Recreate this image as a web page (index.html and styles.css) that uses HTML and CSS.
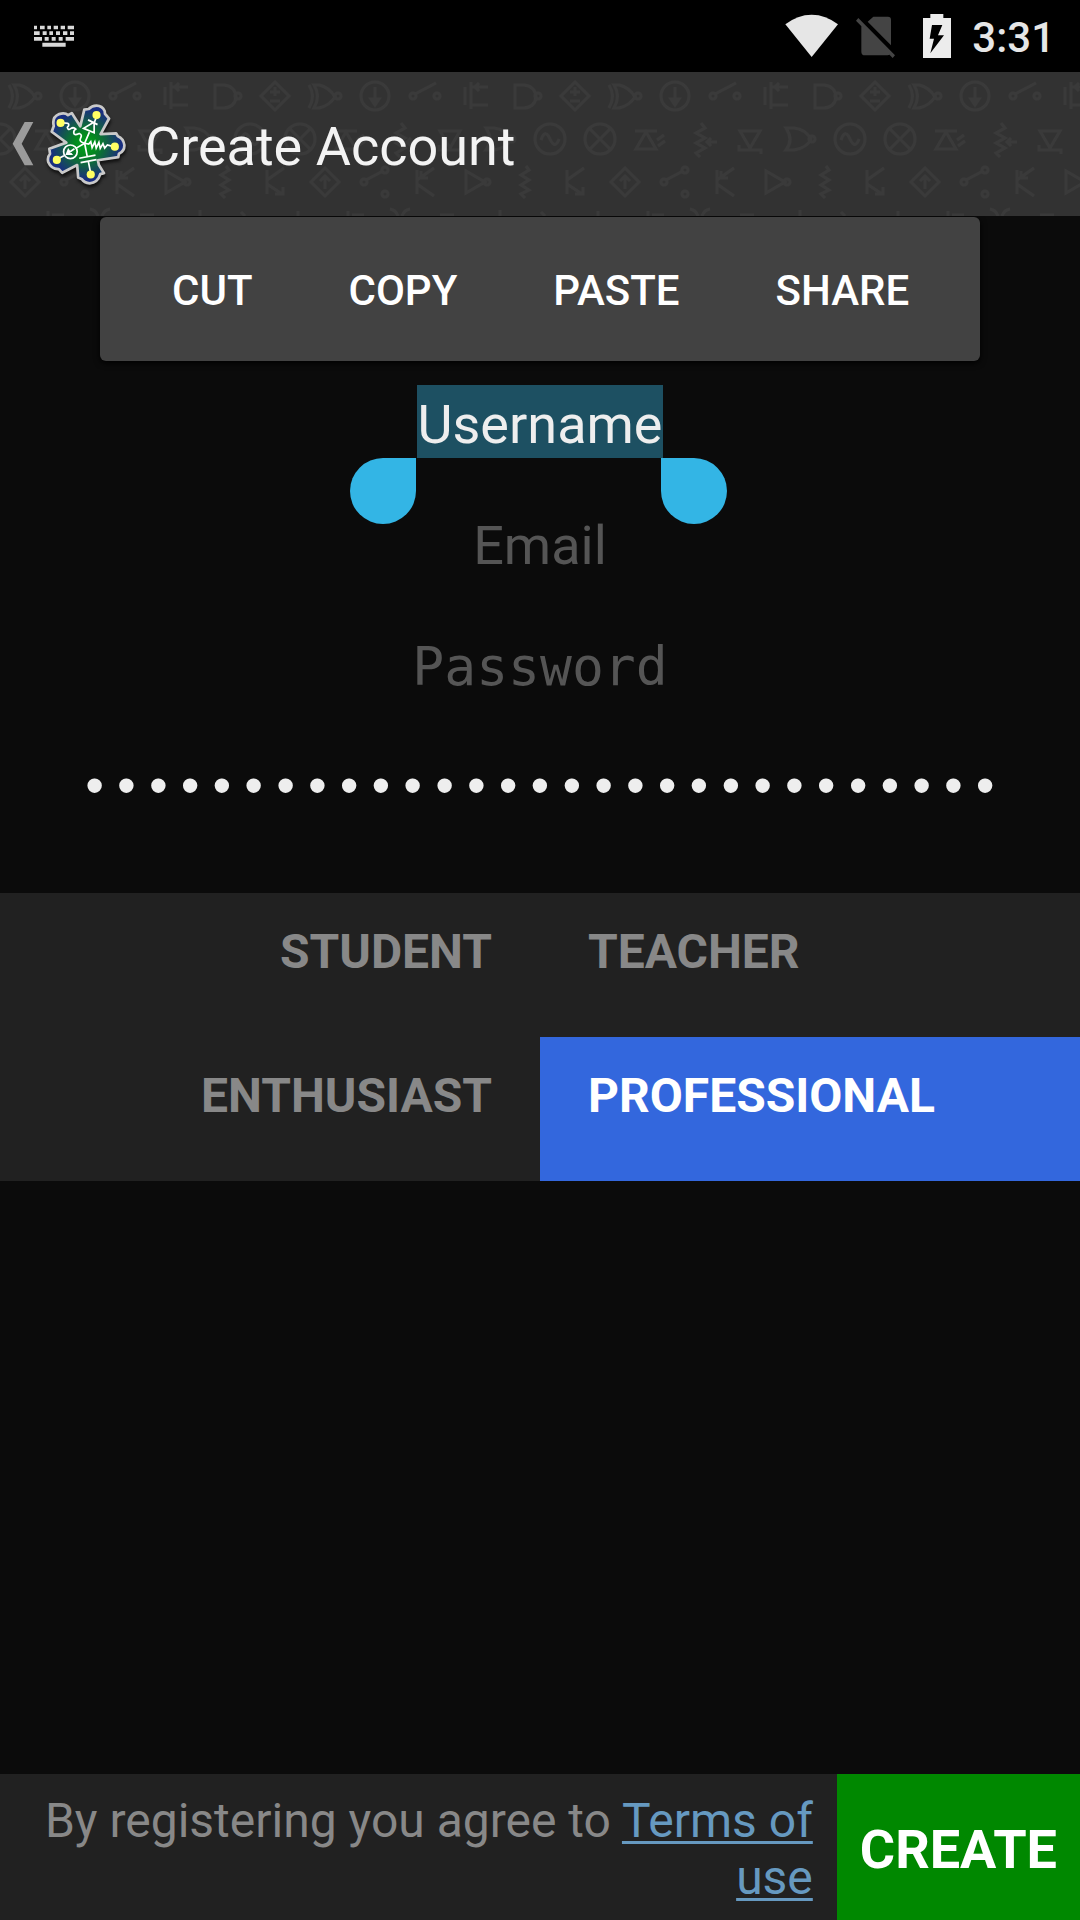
FILE: index.html
```html
<!DOCTYPE html>
<html lang="en">
<head>
<meta charset="utf-8">
<meta name="viewport" content="width=device-width, initial-scale=1">
<title>Create Account</title>
<link rel="stylesheet" href="styles.css">
</head>
<body>
<div class="screen">
  <div class="status-bar">
    <svg class="icon-keyboard" width="40" height="22" viewBox="0 0 120 66" fill="#d8d8d8" aria-hidden="true">
      <path d="M0 2h9v11H0zM18 2h14v11H18zM40 2h11v11H40zM59 2h13v11H59zM80 2h13v11H80zM101 2h19v11h-19zM0 19h17v11H0zM26 19h12v11H26zM46 19h11v11H46zM66 19h12v11H66zM87 19h13v11H87zM108 19h12v11h-12zM0 36h24v11H0zM32 36h12v11H32zM53 36h12v11H53zM74 36h12v11H74zM95 36h25v11H95zM25 53h70v12H25z"/>
    </svg>
    <div class="status-icons">
      <svg width="54" height="44" viewBox="0 0 162 132" fill="#e6e6e6" aria-hidden="true"><path d="M1 31Q38 2 80 2t79 29L80 129z"/></svg>
      <svg class="icon-sim" width="40" height="44" viewBox="0 0 120 132" fill="#444" aria-hidden="true"><path d="M35 23 52 8h44q9 0 9 9v77zM16 34l85 87q-2 3-7 3H27q-11 0-11-11zM0 20l7-8 110 112-7 8z"/></svg>
      <svg width="28" height="44" viewBox="0 0 84 132" aria-hidden="true"><path fill="#ececec" d="M0 12h22V0h39v12h23v120H0z"/><path fill="#000" d="M27 33h31L45 64h18L22 118l11-44H20z"/></svg>
      <span class="clock">3:31</span>
    </div>
  </div>

  <header class="app-bar">
    <svg class="circuit" width="100%" height="100%" aria-hidden="true">
      <defs>
        <pattern id="circuit" width="300" height="144" patternUnits="userSpaceOnUse">
          <g fill="none" stroke="#3a3a3a" stroke-width="3">
            <path d="M9 13q7 11 0 23M14 13q7 11 0 23h5q10-2 16-11q-6-10-16-12z"/><circle cx="38" cy="24" r="3"/>
            <circle cx="75" cy="24" r="14"/><path d="M75 15v16M71 27l4 6 4-6z"/>
            <circle cx="113" cy="24" r="3"/><circle cx="137" cy="24" r="3"/><path d="m115 22 21-11"/>
            <path d="M165 15v18M171 10v27M171 33h17M171 15h17M179 11l-4 4 4 4"/>
            <path d="M215 13h9q11 1 12 12q-1 10-12 11h-9z"/><circle cx="238" cy="24" r="3"/>
            <path d="m275 10 14 14-14 14-14-14zM270 20h10M275 15v9M270 29h10"/>
            <circle cx="0" cy="67" r="15"/><circle cx="300" cy="67" r="15"/><path d="M-10 57 10 77M-10 77 10 57M290 57l20 20M290 77l20-20"/>
            <path d="M35 59h22M36 77l10-17 10 17zM57 68l7-5M58 74l7-5"/>
            <path d="m101 51 4 5-9 5 9 5-9 5 9 5-9 5 4 4M107 70h10M111 66l-4 4 4 4"/>
            <path d="M140 59h20l-10 17zM139 73v5h22v4"/>
            <path d="M186 56q8 12 0 22h8q13-2 17-11q-6-10-17-11z"/><circle cx="212" cy="67" r="3"/>
            <circle cx="250" cy="67" r="15"/><path d="M241 68q4-12 9-1t9 0"/>
            <path d="m25 96 14 14-14 14-14-14zM25 117v-13M20 109l5-5 5 5"/>
            <circle cx="64" cy="110" r="3"/><circle cx="85" cy="98" r="3"/><circle cx="85" cy="122" r="3"/><path d="m66 108 17-9"/>
            <path d="M117 98v24M117 108l17-12M117 112l17 12M121 99v7h7"/>
            <path d="M166 99v22l19-11z"/><circle cx="187" cy="110" r="3"/>
            <path d="m226 94 3 4-8 5 8 5-8 5 8 5-8 4 4 4"/>
            <path d="M267 98v24M267 108l17-12M267 112l15 10M283 115v7h-8"/>
            <path d="M90 137q6 1 8 7M110 137q-6 1-8 7M140 143h14M200 138v6M241 140l4 4M298 139v5M302 139v5M48 139v5M52 143h12"/>
          </g>
        </pattern>
      </defs>
      <rect width="100%" height="100%" fill="url(#circuit)"/>
    </svg>
    <button class="back" type="button" aria-label="Back">
      <svg width="22" height="44" viewBox="0 0 66 132"><path fill="#9b9b9b" d="M38 0h26L29 65l35 65H38L2 65z"/></svg>
      <svg class="logo" width="112" height="112" viewBox="0 0 330 330">
        <defs>
          <radialGradient id="board" gradientUnits="userSpaceOnUse" cx="164" cy="160" r="110">
            <stop offset="0" stop-color="#00a51b"/><stop offset=".3" stop-color="#04881f"/><stop offset=".65" stop-color="#145550"/><stop offset=".95" stop-color="#192e80"/>
          </radialGradient>
        </defs>
        <g class="logo-board" stroke="#c9c9c9" stroke-width="8" stroke-linejoin="round">
          <path fill="url(#board)" d="M160 58l13-2q9-10 23-10 17 0 24 16l1 8 12 14-25 46 46-2 5 8q16 6 19 26 1 18-16 26l-2 10-60 9 3 14 15 24-11 3q-7 25-31 27-17-2-23-12l-11-5-3-37-44 23-10-11q-22 1-31-20-4-15 5-25l-2-15 50-18-43-32 6-17q-6-26 16-35 17-5 26 3l11-6 25 39z"/>
        </g>
        <g fill="none" stroke="#fff" stroke-width="5">
          <path d="m161 157 14-33M158 113l31 13 0-32zM171 88l28 14M189 98l6-18"/>
          <path d="m161 157 12 2 6-7 4 18 8-17 4 18 8-17 4 18 8-14 5 13 8-9 18 5"/>
          <path d="m161 157 8 41M145 201l48-9M149 214l47-9M172 211l6 30"/>
          <path d="m161 157-26 15M100 194l-16 8"/><circle cx="119" cy="182" r="20"/><path d="m108 189 23-16M108 189l5-13 9 13z"/>
          <path d="M161 157q-18-4-12-15t-4-14q-15 7-16-1t6-12q-7-7-15-1t-10-4q8-8 1-12l-15-1"/>
        </g>
        <g fill="#ffff63"><circle cx="196" cy="74" r="12"/><circle cx="250" cy="167" r="12"/><circle cx="179" cy="249" r="12"/><circle cx="79" cy="206" r="12"/><circle cx="90" cy="97" r="12"/></g>
      </svg>
    </button>
    <h1 class="title">Create Account</h1>
  </header>

  <main class="content">
    <div class="edit-menu" role="toolbar" aria-label="Text actions">
      <button type="button">CUT</button>
      <button type="button">COPY</button>
      <button type="button">PASTE</button>
      <button type="button">SHARE</button>
    </div>

    <form id="register" class="fields">
      <div class="field">
        <div class="selection">
          <input class="selected-text" type="text" value="Username" aria-label="Username">
          <span class="handle handle-start"></span>
          <span class="handle handle-end"></span>
        </div>
      </div>
      <div class="field"><input type="email" placeholder="Email" aria-label="Email"></div>
      <div class="field"><input class="mono" type="password" placeholder="Password" aria-label="Password"></div>
      <div class="field"><input class="mono dots" type="password" value="aaaaaaaaaaaaaaaaaaaaaaaaaaaaa" aria-label="Confirm password"></div>
    </form>

    <div class="roles" role="radiogroup" aria-label="Account type">
      <label class="role role-left"><input type="radio" name="role" form="register">STUDENT</label>
      <label class="role"><input type="radio" name="role" form="register">TEACHER</label>
      <label class="role role-left"><input type="radio" name="role" form="register">ENTHUSIAST</label>
      <label class="role"><input type="radio" name="role" form="register" checked>PROFESSIONAL</label>
    </div>
  </main>

  <footer class="footer">
    <p class="terms">By registering you agree to <a href="#terms">Terms of use</a></p>
    <button class="create" type="submit" form="register">CREATE</button>
  </footer>
</div>
</body>
</html>
```

FILE: styles.css
```css
* {
  box-sizing: border-box;
}

body {
  margin: 0;
  background: #0b0b0b;
  color: #eee;
  font-family: Roboto, "Noto Sans", sans-serif;
  font-size: 54px;
}

button,
input {
  margin: 0;
  padding: 0;
  border: 0;
  background: none;
  color: inherit;
  font: inherit;
  outline: none;
}

svg {
  display: block;
}

.screen {
  display: flex;
  flex-direction: column;
  min-height: 100vh;
}

/* Status bar */
.status-bar {
  display: flex;
  align-items: center;
  justify-content: space-between;
  height: 72px;
  padding: 0 25px 0 34px;
  background: #000;
}

.status-icons {
  display: flex;
  align-items: center;
  gap: 17px;
}

.icon-sim {
  margin-right: 10px;
}

.clock {
  margin-left: 4px;
  padding-top: 4px;
  color: #e6e6e6;
  font-size: 42px;
  font-weight: 500;
  line-height: 48px;
}

/* App bar */
.app-bar {
  position: relative;
  display: flex;
  align-items: center;
  height: 144px;
  background: #323232;
}

.circuit {
  position: absolute;
  inset: 0;
}

.back {
  position: relative;
  display: flex;
  align-items: center;
  padding-left: 12px;
}

.logo {
  margin-top: 4px;
  margin-left: -4px;
}

.logo-board {
  filter: drop-shadow(2px 8px 5px #111);
}

.title {
  position: relative;
  margin: 0;
  padding-top: 6px;
  padding-left: 3px;
  color: #f3f3f3;
  font-size: 54px;
  font-weight: 400;
  line-height: 64px;
}

/* Form */
.content {
  flex: 1;
}

.edit-menu {
  display: flex;
  justify-content: space-between;
  height: 144px;
  margin: 1px 100px 0;
  padding: 2px 24px 0;
  border-radius: 6px;
  background: #424242;
  box-shadow: 0 2px 6px #000;
}

.edit-menu button {
  padding: 0 48px;
  color: #fff;
  font-size: 42px;
  font-weight: 500;
}

.fields {
  padding: 0 24px 48px;
}

.field {
  display: flex;
  align-items: center;
  justify-content: center;
  height: 121px;
}

.field input {
  width: 100%;
  height: 73px;
  padding-top: 6px;
  text-align: center;
  line-height: 66px;
}

.field input::placeholder {
  color: #555;
  opacity: 1;
}

.field .mono {
  font-family: "DejaVu Sans Mono", monospace;
  font-size: 53px;
}

.field .dots {
  padding-top: 10px;
  font-family: "Liberation Mono", monospace;
}

.selection {
  position: relative;
  display: flex;
}

.selection .selected-text {
  width: auto;
  field-sizing: content;
  background: #1d5062;
}

.handle {
  position: absolute;
  top: 100%;
  width: 66px;
  height: 66px;
  background: #33b5e5;
}

.handle-start {
  right: 100%;
  margin-right: 1px;
  border-radius: 33px 0 33px 33px;
}

.handle-end {
  left: 100%;
  margin-left: -2px;
  border-radius: 0 33px 33px 33px;
}

/* Account type */
.roles {
  display: grid;
  grid-template-columns: 1fr 1fr;
  background: #212121;
}

.role {
  height: 144px;
  padding: 31px 48px 0;
  color: #888;
  font-size: 48px;
  font-weight: 700;
  line-height: 56px;
}

.role-left {
  text-align: right;
}

.role input {
  position: absolute;
  opacity: 0;
}

.role:has(input:checked) {
  background: #3367dd;
  color: #fff;
}

/* Footer */
.footer {
  display: flex;
  background: #212121;
}

.terms {
  flex: 1;
  margin: 0;
  padding: 18px 24px 14px;
  color: #888;
  font-size: 48px;
  line-height: 57px;
  text-align: right;
}

.terms a {
  color: #6699c0;
  text-decoration-thickness: 3px;
  text-decoration-skip-ink: none;
  text-underline-offset: 4px;
}

.create {
  padding: 4px 23px 0;
  background: #008800;
  color: #fff;
  font-weight: 700;
}
```
